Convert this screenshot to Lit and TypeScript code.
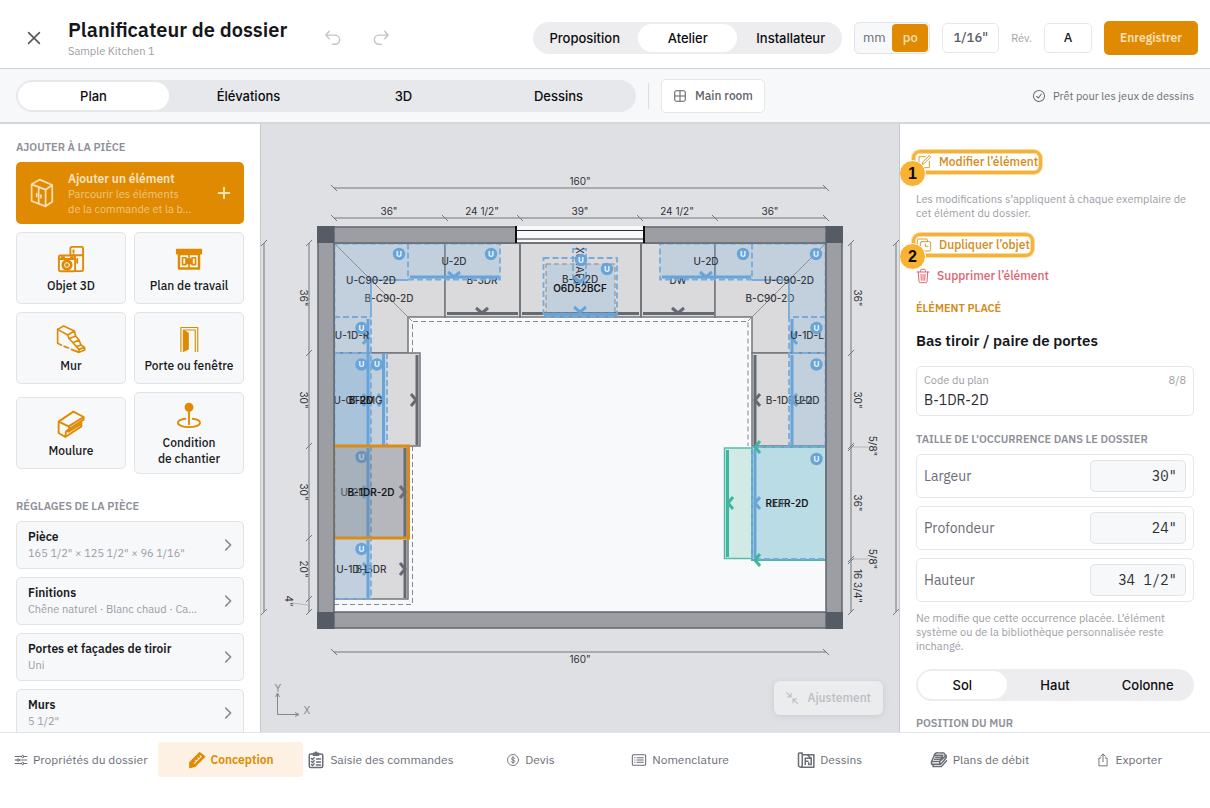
import { LitElement, html, css, svg, nothing } from "lit";
import { customElement, state } from "lit/decorators.js";
import { classMap } from "lit/directives/class-map.js";

/* ---------- icons ---------- */

const line = (size: number, body: unknown, width = 1.5) => html`<svg
  width=${size}
  height=${size}
  viewBox="0 0 24 24"
  fill="none"
  stroke="currentColor"
  stroke-width=${width}
  stroke-linecap="round"
  stroke-linejoin="round"
  aria-hidden="true"
>
  ${body}
</svg>`;

const icons = {
  close: () => line(20, svg`<path d="M5.500 5.500l13 13M18.500 5.500l-13 13" />`, 1.9),
  undo: () => line(20, svg`<path d="M7.500 4L3.500 8.500l4 4.500M4 8.500H14.500a5.500 5.500 0 0 1 0 11h-3" />`, 1.7),
  redo: () => line(20, svg`<path d="M16.500 4l4 4.500-4 4.500M20 8.500H9.500a5.500 5.500 0 0 0 0 11h3" />`, 1.7),
  window: () => line(14, svg`<rect x="3" y="3" width="18" height="18" rx="3" /><path d="M12 3v18M3 12h18" />`, 1.8),
  check: () => line(14, svg`<circle cx="12" cy="12" r="9.500" /><path d="M8 12.500l3 3 5-7" />`, 1.8),
  plus: () => line(16, svg`<path d="M12 4v16M4 12h16" />`, 3),
  chevron: () => line(14, svg`<path d="M8 3.500l8.500 8.500L8 20.500" />`, 2.8),
  fit: () =>
    line(16, svg`<path d="M4 4l6.500 6.500M10.500 5v5.500H5M20 20l-6.500-6.500M13.500 19v-5.500H19" />`, 1.6),
  cabinet: () =>
    line(
      32,
      svg`<path d="M4.200 5.500L10.200 2l9.500 4-5 3.500zM4.200 5.500V18l10.500 4V9.500M14.700 22l5-3.500V6M9.500 7.500V20" />
      <path d="M8 12.500v2M11.200 13.500v2" />`,
      1.3,
    ),
  object3d: () =>
    line(
      30,
      svg`<path d="M11.500 8V3.500a1.200 1.200 0 0 1 1.200-1.200h7.800a1.200 1.200 0 0 1 1.200 1.200v17a1.200 1.200 0 0 1-1.200 1.200H15M12 9h9.500M14 5v2M17 12v3" />
      <rect x="2.300" y="9.200" width="13" height="12.600" rx="1.200" />
      <path d="M2.300 12h13M4.500 10.600h2M12 10.600h1.500" />
      <circle cx="8.800" cy="16.800" r="3.700" fill="currentColor" />
      <circle cx="8.800" cy="16.800" r="1.900" stroke="#f7f8fa" stroke-width=".8" />`,
      1.5,
    ),
  counter: () =>
    line(
      30,
      svg`<path d="M2.200 4.500h19.600v3.300H2.200z" fill="currentColor" />
      <path d="M4 8h16v11.500H4z" stroke-width="2" />
      <path d="M6.800 11h2.800v5.500H6.800zM14.400 11h2.800v5.500h-2.800z" />
      <path d="M12 9v10M10.200 12h3.600v3.500h-3.600z" fill="currentColor" />`,
      1.3,
    ),
  wall: () =>
    line(
      30,
      svg`<path d="M1.300 4.300l4.800-2.700 8.600 4 1 4 2.700 3.200 1.600 4 2.900 1.900v2.100l-4.500 1.900-6-2.400M10 19.200l-3.500-1.300M4.500 17l-3.200-1.600V4.300l8 4.500 1.200 3 3.100 3.200 2.700 3.100 2.100 2.200v2.400M9.300 8.800l5.400-3.200M13.600 15l4.800-2.200M10.500 11.800l5.200-2.200M16.300 18.100l3.700-1.300M18.400 20.300l4.500-1.600" />`,
      1.3,
    ),
  door: () =>
    line(
      30,
      svg`<path d="M5.500 22V2.800h13.500V22M7.500 22V4.800H17V22" stroke-width=".9" />
      <path d="M8.300 5.500l3 2V20l-3 1.500z" fill="currentColor" />`,
      1.1,
    ),
  moulding: () =>
    line(
      30,
      svg`<path d="M2.100 10.100l11.800-8 8.200 4.300-12 7.500zM2.100 10.100v9.100l5.400 3.200 12.800-8.500v-3.200M22.100 6.400v2.100L10.500 16v-2M10.500 16l-2.500 2-.5 4.400M9.800 18.300l10.500-6.600" />`,
      1.5,
    ),
  condition: () =>
    line(
      30,
      svg`<circle cx="12" cy="5" r="2.800" fill="currentColor" />
      <path d="M12 8v10.500" />
      <path d="M9 14.200c-3.400.4-5.800 1.600-5.800 3.200 0 2 3.900 3.500 8.800 3.500s8.800-1.500 8.800-3.500c0-1.600-2.400-2.800-5.800-3.200" />`,
      1.5,
    ),
  edit: () => line(16, svg`<path d="M14 4H4.500v16.500H20V11M9.500 15l.8-3.300L20 2.500l2 2L12.500 14z" />`, 1.3),
  duplicate: () =>
    line(
      16,
      svg`<path d="M6 17H3.500a1.500 1.500 0 0 1-1.500-1.500v-11A1.500 1.500 0 0 1 3.500 3h12A1.500 1.500 0 0 1 17 4.500V7" />
      <rect x="6.500" y="7" width="15.500" height="14" rx="2" /><path d="M14 10.500V14h4" />`,
      1.3,
    ),
  trash: () =>
    line(
      16,
      svg`<path d="M1.500 6h18M7 5.500V3.500A1.500 1.500 0 0 1 8.500 2h4a1.500 1.500 0 0 1 1.500 1.500v2M3.500 6l1 14.500A1.800 1.800 0 0 0 6.300 22h8.400a1.800 1.800 0 0 0 1.800-1.500L17.500 6M7.500 9.500l.4 9M10.500 9.500v9M13.500 9.500l-.4 9" />`,
      1.5,
    ),
  sliders: () =>
    line(
      14,
      svg`<path d="M2 6h11M17 6h5M2 12h3M9 12h13M2 18h11M17 18h5" /><circle cx="15" cy="6" r="2" /><circle cx="7" cy="12" r="2" /><circle cx="15" cy="18" r="2" />`,
      1.7,
    ),
  design: () =>
    line(
      18,
      svg`<path d="M2.500 15.500L15.500 2.500l6.500 5L9 20.500l-6.500 1.500z" fill="currentColor" />
      <path d="M8.500 16.500l8.500-8.500M10 12l1.500 1.500M13 9l1.500 1.500M16 6l1.500 1.500" stroke="#fdf1e3" stroke-width="1.400" />`,
      2,
    ),
  orders: () =>
    line(
      18,
      svg`<rect x="3" y="4" width="18" height="18" rx="2" /><path d="M8.500 5.500V3h2l1.500-1.500L13.500 3h2v2.500z" fill="currentColor" />
      <path d="M6 10l1.300 1.300L9.500 9M6 14l1.300 1.300 2.200-2.300M6 18l1.300 1.300 2.200-2.300M12.500 10.500H18M12.500 14.500H18M12.500 18.500H18" />`,
      2,
    ),
  quote: () =>
    line(
      14,
      svg`<circle cx="12" cy="12" r="9.500" /><path d="M14.800 9.300c-.4-1-1.500-1.500-2.800-1.500-1.600 0-2.800.8-2.800 2.100 0 2.900 5.800 1.300 5.800 4.200 0 1.300-1.300 2.100-3 2.100-1.500 0-2.600-.6-3-1.700M12 6v12" />`,
      1.5,
    ),
  bom: () =>
    line(
      16,
      svg`<rect x="2" y="4" width="20" height="16" rx="1.500" /><path d="M5.500 8.500h.5M5.500 12h.5M5.500 15.500h.5M9 8.500h9.500M9 12h9.500M9 15.500h9.500" />`,
      1.6,
    ),
  drawings: () =>
    line(
      18,
      svg`<path d="M6.500 2.500h-3A1.800 1.800 0 0 0 2 4.500V19a2.500 2.500 0 0 0 5 0V2.500M4.500 21.500H22.500V5H7.500M11 18V9.500h8V18h-3M11 13.500h3.500M19 9.500L14.500 6M15.500 18v-2.500" />`,
      2,
    ),
  cutlist: () =>
    line(
      18,
      svg`<path d="M2 14l3.500-7.500a5 5 0 0 1 5-4h5.500a4 4 0 0 1 4 2.500M2 14h11l4-8.500H6M2 14v3.500h12.500L21.500 9V5.500L13 14v3.500M5 20.500h10.500L22 13M6 11h9M7.500 8.300h9M4 17.500v3" />`,
      2,
    ),
  share: () => line(14, svg`<path d="M8 8.500H5V22h14V8.500h-3M12 15V2M8 5.500L12 2l4 3.500" />`, 1.6),
};

/* ---------- plan drawing ---------- */

type Tone = "ink" | "blue" | "teal";

const rect = (cls: string, x1: number, y1: number, x2: number, y2: number) =>
  svg`<rect class=${cls} x=${x1} y=${y1} width=${x2 - x1} height=${y2 - y1} />`;
const path = (cls: string, d: string) => svg`<path class=${cls} d=${d} />`;
const label = (x: number, y: number, text: string, cls = "label") =>
  svg`<text class=${cls} x=${x} y=${y} dy="0.350em">${text}</text>`;
const turned = (x: number, y: number, text: string, cls = "dim") =>
  svg`<text class=${cls} x="0" y="0" dy="0.350em" transform=${`translate(${x} ${y}) rotate(90)`}>${text}</text>`;
const upper = (x: number, y: number) =>
  svg`<circle class="badge" cx=${x} cy=${y} r="6.200" /><text class="badge-text" x=${x} y=${y} dy="0.360em">U</text>`;

const ARMS = { down: "-6 -6l6 5 6-5", right: "-5 -6l5 6-5 6", left: "5 -6l-5 6 5 6" };
const arrow = (x: number, y: number, way: keyof typeof ARMS, tone: Tone) =>
  path(`bar ${tone}`, `M${x} ${y}m${ARMS[way]}`);

const ticksX = (y: number, xs: number[]) =>
  path("dim-line", `M${xs[0]} ${y}H${xs[xs.length - 1]}` + xs.map((x) => `M${x - 3} ${y - 3}l6 6`).join(""));
const ticksY = (x: number, ys: number[]) =>
  path("dim-line", `M${x} ${ys[0]}V${ys[ys.length - 1]}` + ys.map((y) => `M${x - 3} ${y + 3}l6-6`).join(""));

@customElement("floor-plan")
export class FloorPlan extends LitElement {
  static styles = css`
    :host { display: block; }
    svg { display: block; width: 100%; height: 100%; }
    text { font-family: Inter, "Liberation Sans", sans-serif; text-anchor: middle; }
    .dim { font-size: 10px; fill: #303236; }
    .dim-line { fill: none; stroke: #74777d; stroke-width: 1; }
    .leader { fill: none; stroke: #b3b5ba; stroke-width: 1; }
    .label { font-size: 10px; font-weight: 500; fill: #36393f; }
    .strong { font-size: 10px; font-weight: 600; fill: #17181b; }
    .faint { font-size: 10px; font-weight: 500; fill: #4d545e; }
    .floor { fill: #f8f9fb; }
    .wall { fill: #9c9ea3; stroke: #62666e; stroke-width: 1.5; }
    .corner { fill: #555c65; }
    .base { fill: #dadadd; stroke: #73767c; stroke-width: 1.5; }
    .seam { fill: none; stroke: #73767c; stroke-width: 2; }
    .mitre { fill: none; stroke: #8b8d92; stroke-width: 1; }
    .counter { fill: none; stroke: #85888f; stroke-width: 1; stroke-dasharray: 5 3; }
    .wash { fill: #7cb2de; fill-opacity: 0.25; }
    .wash-deep { fill: #5fa0d2; fill-opacity: 0.26; }
    .edge { fill: none; stroke: #76abdb; stroke-width: 1.8; stroke-dasharray: 6 3; }
    .solid { fill: none; stroke: #76abdb; stroke-width: 1.8; }
    .bar { fill: none; stroke-width: 3; }
    .ink { stroke: #656971; }
    .blue { stroke: #68a4d9; }
    .teal { stroke: #3fb59f; }
    .badge { fill: #68a4d8; }
    .badge-text { font-size: 8px; font-weight: 700; fill: #f0f6fc; }
    .pane { fill: #f8f9fb; stroke: #2c2d31; stroke-width: 1; }
    .jamb { stroke: #0c0c0e; stroke-width: 2; }
    .chosen { fill: #6f747f; fill-opacity: 0.34; stroke: #d98c17; stroke-width: 3; }
    .fridge-door { fill: #d2eae5; stroke: #54bda9; stroke-width: 1.5; }
    .fridge { fill: #b9dce5; stroke: #4fb6a6; stroke-width: 2; }
    .axis { fill: none; stroke: #85888e; stroke-width: 1; }
    .axis-text { font-size: 10px; fill: #85888e; }
  `;

  render() {
    return html`<svg viewBox="261 124 638 608" role="img" aria-label="Plan">
      ${rect("floor", 334, 243, 826, 612)}
      ${path("base", "M334 243H445V317H408V353H334z")}
      ${rect("base", 445, 243, 520, 317)}${rect("base", 520, 243, 641, 317)}
      ${rect("base", 641, 243, 715, 317)}
      ${path("base", "M715 243H826V353H752V317H715z")}
      ${rect("base", 334, 353, 420, 446)}${rect("base", 334, 446, 408, 538)}
      ${rect("base", 334, 538, 408, 599)}${rect("base", 752, 353, 826, 446)}
      ${path("seam", "M520 243V317M641 243V317")}
      ${path("counter", "M334 604.5H412.5V446M412.5 353V321.500H748V446")}
      ${path("mitre", "M334 243L412 321M826 243L748 321")}
      ${path("bar ink", "M447 313.5H518M522 313.5H639M643 313.5H714M417 355V445M405 540V598M755 355V446")}
      ${arrow(482, 314, "down", "ink")}${arrow(678, 314, "down", "ink")}
      ${arrow(416, 400, "right", "ink")}${arrow(405, 569, "right", "ink")}
      ${arrow(755, 400, "left", "ink")}

      ${label(389, 298.5, "B-C90-2D")}${label(770, 298.5, "B-C90-2D")}
      ${label(482, 280, "B-3DR")}${label(678, 280, "DW")}
      ${label(371, 569, "B-3DR")}${label(789, 400, "B-1DR-2D")}

      ${path("wash", "M334 243H408V280H371V317H334z")}
      ${path("wash", "M826 243H752V280H789V317H826z")}
      ${rect("wash", 408, 243, 500, 279)}${rect("wash", 660, 243, 752, 279)}
      ${rect("wash", 334, 317, 371, 353)}${rect("wash", 789, 317, 826, 353)}
      ${rect("wash", 334, 353, 387, 446)}${rect("wash-deep", 334, 353, 371, 446)}
      ${rect("wash", 334, 446, 371, 538)}${rect("wash", 334, 538, 371, 599)}
      ${rect("wash", 789, 353, 826, 446)}
      ${path("mitre", "M334 243L371 280M826 243L789 280")}
      ${path("edge", "M334 243.5H500V279.500H408V243M334 317H371M334.5 243V599H371V317M334 353H371M387 353V446")}
      ${path("edge", "M826 243.5H660V279.500H752V243M826 317H789V446M826 353H789M825.5 243V446")}
      ${path("solid", "M371 317V280H408M789 317V280H752")}
      ${path("bar blue", "M410 277H499M662 277H751M368 319V446M368 540V598M383.5 354V445M792 319V352M792 355V445")}
      ${arrow(454, 278, "down", "blue")}${arrow(706, 278, "down", "blue")}
      ${arrow(368, 338, "right", "blue")}${arrow(792, 338, "left", "blue")}
      ${arrow(368, 400, "right", "blue")}${arrow(383, 400, "right", "blue")}
      ${arrow(368, 569, "right", "blue")}${arrow(792, 400, "left", "blue")}

      ${rect("wash", 546, 264, 615, 313)}${rect("counter", 546, 264, 615, 313)}
      ${rect("edge", 543.5, 258, 617, 316.5)}${rect("edge", 573, 249, 586, 283)}
      ${path("bar blue", "M544 314.5H617")}${arrow(580, 313, "down", "blue")}
      ${label(580, 279, "B-C-2D")}${turned(579, 266, "X04AFF")}
      ${upper(581, 260)}${upper(607, 269)}
      ${arrow(580, 283, "down", "blue")}
      ${label(580, 288, "O6D52BCF", "strong")}

      ${label(371, 280, "U-C90-2D")}${label(789, 280, "U-C90-2D")}
      ${label(454, 261, "U-2D")}${label(706, 261, "U-2D")}
      ${label(352, 335, "U-1D-R")}${label(807, 335, "U-1D-L")}
      ${label(353, 569, "U-1D-L")}${label(807, 400, "U-2D")}
      ${label(358, 400, "U-OTRMG")}${label(361, 400, "B-2D", "strong")}
      ${upper(399, 254)}${upper(491, 254)}${upper(743, 254)}${upper(816, 254)}
      ${upper(361.5, 328)}${upper(816.5, 328)}${upper(361.5, 364.5)}${upper(377, 364.5)}
      ${upper(361.5, 549)}${upper(816.5, 364.5)}${upper(361.5, 457)}

      ${path("bar blue", "M368 448V537")}${arrow(368, 492, "right", "blue")}
      ${path("bar ink", "M405 448V537")}${arrow(405, 492, "right", "ink")}
      ${label(353, 492, "U-2D", "faint")}
      ${rect("chosen", 333.5, 446, 408.5, 538)}
      ${label(371, 492, "B-1DR-2D", "strong")}

      ${rect("fridge-door", 724.5, 448, 826, 558.5)}${rect("fridge", 752, 447, 826, 560)}
      ${path("edge", "M826 447H752V559H826V447")}
      ${path("bar teal", "M727.5 450V557")}${path("bar blue", "M755 449V558")}
      ${arrow(728, 503, "left", "teal")}${arrow(755, 447, "left", "teal")}${arrow(755, 560, "left", "teal")}
      ${arrow(755, 503, "left", "blue")}
      ${label(787, 503, "REFR-2D", "strong")}${label(780, 503, "UF", "faint")}
      ${upper(816.5, 459)}

      ${rect("wall", 318, 227, 842, 243)}${rect("wall", 318, 612, 842, 628)}
      ${rect("wall", 318, 227, 334, 628)}${rect("wall", 826, 227, 842, 628)}
      ${rect("corner", 317, 226, 334, 243)}${rect("corner", 826, 226, 843, 243)}
      ${rect("corner", 317, 612, 334, 629)}${rect("corner", 826, 612, 843, 629)}
      ${rect("floor", 516, 226, 644, 242)}${rect("pane", 516, 230.5, 644, 239)}
      ${path("jamb", "M516 226V243M644 226V243")}

      ${ticksX(188, [334, 826])}${ticksX(218, [334, 445, 520, 640, 715, 826])}${ticksX(652, [334, 826])}
      ${ticksY(264, [243, 612])}${ticksY(309, [243, 353, 446, 538, 599, 612])}
      ${ticksY(851, [243, 353, 446, 448, 559, 561, 612])}${ticksY(896, [243, 612])}
      ${label(580, 181, '160"', "dim")}${label(580, 659, '160"', "dim")}
      ${label(389, 211.5, '36"', "dim")}${label(482, 211.5, '24 1/2"', "dim")}${label(580, 211.5, '39"', "dim")}
      ${label(677, 211.5, '24 1/2"', "dim")}${label(770, 211.5, '36"', "dim")}
      ${turned(303, 298, '36"')}${turned(303, 400, '30"')}${turned(303, 492, '30"')}${turned(303, 569, '20"')}
      ${turned(288, 601, '4"')}${path("leader", "M292 603L308 605M853 447H868M853 559H868")}
      ${turned(857, 298, '36"')}${turned(857, 400, '30"')}${turned(857, 503, '36"')}
      ${turned(857, 586, '16 3/4"')}${turned(872, 446, '5/8"')}${turned(872, 559, '5/8"')}

      ${path("axis", "M277.500 694V714.500H298M275.500 697l2-4 2 4M295 712.500l4 2-4 2")}
      ${label(278, 688, "Y", "axis-text")}${label(307, 710, "X", "axis-text")}
    </svg>`;
  }
}

/* ---------- segmented control ---------- */

@customElement("segmented-control")
export class SegmentedControl extends LitElement {
  static properties = { items: { attribute: false }, selected: { type: Number } };
  declare items: string[];
  declare selected: number;

  constructor() {
    super();
    this.items = [];
    this.selected = 0;
  }

  static styles = css`
    :host {
      display: grid;
      grid-auto-flow: column;
      grid-auto-columns: 1fr;
      gap: 4px;
      padding: 2px;
      height: 32px;
      box-sizing: border-box;
      border-radius: 16px;
      background: var(--track, #ededf0);
    }
    .segment {
      border: 0;
      padding: 0;
      border-radius: 14px;
      background: none;
      color: #0c0c0e;
      font: 500 13px/16px Inter, "Liberation Sans", sans-serif;
    }
    .selected { background: #fff; }
  `;

  render() {
    return this.items.map(
      (name, i) => html`<button
        class=${classMap({ segment: true, selected: i === this.selected })}
        aria-pressed=${i === this.selected ? "true" : "false"}
        @click=${() => (this.selected = i)}
      >${name}</button>`,
    );
  }
}

/* ---------- page ---------- */

@customElement("app-root")
export class AppRoot extends LitElement {
  @state() private tab = 1;

  private tools = [
    { name: html`Objet 3D`, icon: icons.object3d },
    { name: html`Plan de travail`, icon: icons.counter },
    { name: html`Mur`, icon: icons.wall },
    { name: html`Porte ou fenêtre`, icon: icons.door },
    { name: html`Moulure`, icon: icons.moulding },
    { name: html`Condition<br />de chantier`, icon: icons.condition },
  ];

  private settings = [
    ["Pièce", '165 1/2" × 125 1/2" × 96 1/16"'],
    ["Finitions", "Chêne naturel · Blanc chaud · Ca…"],
    ["Portes et façades de tiroir", "Uni"],
    ["Murs", '5 1/2"'],
  ];

  private sizes = [
    ["largeur", "Largeur", '30"'],
    ["profondeur", "Profondeur", '24"'],
    ["hauteur", "Hauteur", '34 1/2"'],
  ];

  private tabs = [
    { name: "Propriétés du dossier", icon: icons.sliders },
    { name: "Conception", icon: icons.design },
    { name: "Saisie des commandes", icon: icons.orders },
    { name: "Devis", icon: icons.quote },
    { name: "Nomenclature", icon: icons.bom },
    { name: "Dessins", icon: icons.drawings },
    { name: "Plans de débit", icon: icons.cutlist },
    { name: "Exporter", icon: icons.share },
  ];

  static styles = css`
    :host {
      display: flex;
      flex-direction: column;
      height: 100vh;
      overflow: hidden;
      background: #fff;
      color: #1a1b1e;
      font: 400 12px/16px "IBM Plex Sans", Roboto, "Liberation Sans", sans-serif;
    }
    * { box-sizing: border-box; }
    button, input { font: inherit; color: inherit; margin: 0; }
    button { border: 0; padding: 0; background: none; }
    h1, h2, h3, p { margin: 0; }
    svg { flex: none; display: block; }

    .header {
      display: flex;
      align-items: center;
      gap: 12px;
      padding: 7px 12px 0 24px;
      height: 69px;
      border-bottom: 1px solid #cfcfd5;
    }
    .close { color: #53565d; }
    .titles { margin-left: 12px; }
    .title { font-size: 20px; line-height: 27px; font-weight: 600; color: #151619; white-space: nowrap; }
    .subtitle { font-size: 11px; line-height: 16px; color: #9b9da4; }
    .history { display: flex; gap: 28px; margin-left: 24px; color: #c3c5c9; }
    .audience { width: 309px; margin-left: auto; }
    .units {
      display: flex;
      padding: 1px;
      height: 32px;
      border: 1px solid #e2e3e7;
      border-radius: 5px;
      background: #f7f8fa;
      font-size: 13px;
      color: #6a6d75;
    }
    .unit { width: 36px; border-radius: 4px; }
    .unit.on { background: #df8a00; color: #f7dfb8; font-weight: 500; }
    .field {
      height: 30px;
      border: 1px solid #e6e7ea;
      border-radius: 5px;
      background: #fff;
      text-align: center;
      font-size: 13px;
      font-weight: 500;
      color: #5a5d65;
    }
    .precision { width: 57px; }
    .revision { display: flex; align-items: center; gap: 12px; font-size: 11px; color: #a0a2a8; }
    .revision .field { width: 48px; padding: 0; color: #1a1b1e; }
    .save {
      width: 94px;
      height: 34px;
      border-radius: 5px;
      background: #df8a00;
      color: #f8e0ba;
      font-weight: 600;
    }

    .subbar {
      display: flex;
      align-items: center;
      gap: 12px;
      height: 55px;
      padding: 0 16px;
      background: #f7f8fa;
      border-bottom: 2px solid #d6d7db;
    }
    .views { width: 620px; --track: #e7e8eb; }
    .rule { width: 1px; height: 26px; background: #dcdde1; }
    .room {
      display: flex;
      align-items: center;
      gap: 8px;
      height: 34px;
      padding: 0 11px;
      border: 1px solid #e6e7ea;
      border-radius: 5px;
      background: #fff;
      color: #5f626a;
      font-weight: 500;
    }
    .ready { display: flex; align-items: center; gap: 7px; margin-left: auto; font-size: 11px; color: #6a6d75; }

    .main { display: flex; flex: 1; min-height: 0; }
    .left {
      width: 261px;
      padding: 15px 16px 0;
      border-right: 1px solid #c6c7cc;
      overflow: hidden;
    }
    .caption { font-size: 11px; line-height: 16px; font-weight: 600; color: #8e9098; }
    .add {
      display: flex;
      align-items: center;
      width: 100%;
      height: 62px;
      margin-top: 7px;
      padding: 0 12px 0 10px;
      gap: 10px;
      border-radius: 5px;
      background: #df8a00;
      color: #f8dfb6;
      text-align: left;
    }
    .add-text { flex: 1; font-size: 11px; line-height: 15px; color: #f1c583; white-space: nowrap; }
    .add-title { display: block; font-size: 12px; line-height: 17px; font-weight: 600; color: #f9e4c4; }
    .tools { display: grid; grid-template-columns: 1fr 1fr; align-items: center; gap: 8px; margin-top: 8px; }
    .tool {
      display: flex;
      flex-direction: column;
      align-items: center;
      justify-content: center;
      gap: 4px;
      min-height: 72px;
      padding: 8px 4px 6px;
      border: 1px solid #e2e3e7;
      border-radius: 5px;
      background: #f7f8fa;
      font-weight: 500;
      color: #1a1b1e;
    }
    .tool svg { color: #df8a00; }
    .room-caption { margin-top: 24px; }
    .settings { display: grid; gap: 8px; margin-top: 7px; }
    .setting {
      display: flex;
      align-items: center;
      justify-content: space-between;
      height: 48px;
      padding: 0 8px 0 11px;
      border: 1px solid #e2e3e7;
      border-radius: 5px;
      background: #f7f8fa;
      text-align: left;
      color: #85888f;
    }
    .setting-name { display: block; line-height: 17px; font-weight: 600; color: #1a1b1e; }
    .setting-value { display: block; font-size: 11px; line-height: 17px; color: #9b9da4; }

    .canvas { position: relative; flex: 1; min-width: 0; background: #dfe0e4; }
    .plan { height: 100%; }
    .fit {
      position: absolute;
      right: 16px;
      bottom: 17px;
      display: flex;
      align-items: center;
      gap: 8px;
      height: 34px;
      padding: 0 12px 0 10px;
      border-radius: 6px;
      background: #ebecee;
      box-shadow: 0 1px 6px #c9cad0;
      font-weight: 500;
      color: #bcbec3;
    }

    .right {
      width: 311px;
      padding: 28px 16px 0;
      border-left: 1px solid #c6c7cc;
      overflow: hidden;
    }
    .action { position: relative; display: flex; align-items: center; gap: 7px; height: 20px; color: #d58a14; font-weight: 500; }
    .step::after {
      content: "";
      position: absolute;
      inset: -2px -4px;
      border: 3px solid #f4b23a;
      border-radius: 8px;
      box-shadow: 0 0 0 1px #fbdc9c, inset 0 0 0 1px #fbdc9c;
    }
    .number {
      position: absolute;
      z-index: 1;
      left: -17px;
      top: 8px;
      width: 27px;
      height: 27px;
      border: 1px solid #fff;
      border-radius: 14px;
      background: #f9b233;
      color: #0c0c0e;
      font: 700 16px/25px "Liberation Sans", sans-serif;
      text-align: center;
    }
    .note { font-size: 11px; line-height: 14px; color: #9b9da4; }
    .scope { margin: 20px 0 15px; }
    .remove { gap: 5px; margin-top: 11px; color: #dd6570; }
    .placed { margin-top: 14px; color: #d58a14; }
    .item-name { margin-top: 15px; font-size: 15px; line-height: 20px; font-weight: 600; color: #151619; }
    .code {
      display: grid;
      grid-template-columns: 1fr auto;
      align-content: start;
      margin-top: 15px;
      height: 50px;
      padding: 5px 7px 0;
      border: 1px solid #e6e7ea;
      border-radius: 5px;
      font-size: 11px;
      color: #9b9da4;
    }
    .code-input {
      grid-column: 1 / 3;
      min-width: 0;
      height: 24px;
      padding: 0;
      border: 0;
      background: none;
      font-size: 14px;
      color: #2b2d31;
    }
    .size-caption { margin-top: 15px; }
    .sizes { display: grid; gap: 8px; margin: 7px 0 9px; }
    .size {
      display: flex;
      align-items: center;
      justify-content: space-between;
      height: 44px;
      padding: 0 7px;
      border: 1px solid #e6e7ea;
      border-radius: 5px;
      font-size: 14px;
      color: #6a6d75;
    }
    .size-input {
      width: 96px;
      height: 32px;
      padding: 0 8px;
      border: 1px solid #e2e3e7;
      border-radius: 5px;
      background: #f7f8fa;
      text-align: right;
      font: 400 14px/20px "IBM Plex Mono", "Liberation Mono", monospace;
      color: #2b2d31;
    }
    .level { margin: 16px 0 14px; }

    .footer {
      display: grid;
      grid-template-columns: repeat(8, 1fr);
      align-items: start;
      gap: 4px;
      height: 76px;
      padding: 9px 8px 0;
      border-top: 1px solid #e2e3e7;
    }
    .tab {
      display: flex;
      align-items: center;
      justify-content: center;
      gap: 5px;
      height: 35px;
      border-radius: 4px;
      color: #6a6d75;
      white-space: nowrap;
    }
    .tab.on { background: #fdf1e3; color: #df8a00; font-weight: 600; }
  `;

  render() {
    return html`
      <header class="header">
        <button class="close" aria-label="Fermer">${icons.close()}</button>
        <div class="titles">
          <h1 class="title">Planificateur de dossier</h1>
          <p class="subtitle">Sample Kitchen 1</p>
        </div>
        <div class="history">
          <button aria-label="Annuler">${icons.undo()}</button>
          <button aria-label="Rétablir">${icons.redo()}</button>
        </div>
        <segmented-control class="audience" .items=${["Proposition", "Atelier", "Installateur"]} .selected=${1}></segmented-control>
        <div class="units">
          <button class="unit">mm</button>
          <button class="unit on">po</button>
        </div>
        <button class="field precision">1/16"</button>
        <label class="revision">Rév.<input class="field" value="A" /></label>
        <button class="save">Enregistrer</button>
      </header>

      <nav class="subbar">
        <segmented-control class="views" .items=${["Plan", "Élévations", "3D", "Dessins"]}></segmented-control>
        <span class="rule"></span>
        <button class="room">${icons.window()}Main room</button>
        <span class="ready">${icons.check()}Prêt pour les jeux de dessins</span>
      </nav>

      <main class="main">
        <aside class="left">
          <h2 class="caption">AJOUTER À LA PIÈCE</h2>
          <button class="add">
            ${icons.cabinet()}
            <span class="add-text"><span class="add-title">Ajouter un élément</span>Parcourir les éléments<br />de la commande et la b…</span>
            ${icons.plus()}
          </button>
          <div class="tools">
            ${this.tools.map((t) => html`<button class="tool">${t.icon()}<span>${t.name}</span></button>`)}
          </div>
          <h2 class="caption room-caption">RÉGLAGES DE LA PIÈCE</h2>
          <div class="settings">
            ${this.settings.map(
              ([name, value]) => html`<button class="setting">
                <span><span class="setting-name">${name}</span><span class="setting-value">${value}</span></span>
                ${icons.chevron()}
              </button>`,
            )}
          </div>
        </aside>

        <section class="canvas">
          <floor-plan class="plan"></floor-plan>
          <button class="fit">${icons.fit()}Ajustement</button>
        </section>

        <aside class="right">
          <button class="action step"><span class="number">1</span>${icons.edit()}Modifier l’élément</button>
          <p class="note scope">Les modifications s’appliquent à chaque exemplaire de cet élément du dossier.</p>
          <button class="action step"><span class="number">2</span>${icons.duplicate()}Dupliquer l’objet</button>
          <button class="action remove">${icons.trash()}Supprimer l’élément</button>
          <h3 class="caption placed">ÉLÉMENT PLACÉ</h3>
          <h2 class="item-name">Bas tiroir / paire de portes</h2>
          <div class="code">
            <label for="code">Code du plan</label><span>8/8</span>
            <input id="code" class="code-input" value="B-1DR-2D" maxlength="8" />
          </div>
          <h3 class="caption size-caption">TAILLE DE L’OCCURRENCE DANS LE DOSSIER</h3>
          <div class="sizes">
            ${this.sizes.map(
              ([id, name, value]) => html`<div class="size">
                <label for=${id}>${name}</label><input id=${id} class="size-input" .value=${value} />
              </div>`,
            )}
          </div>
          <p class="note">Ne modifie que cette occurrence placée. L’élément système ou de la bibliothèque personnalisée reste inchangé.</p>
          <segmented-control class="level" .items=${["Sol", "Haut", "Colonne"]}></segmented-control>
          <h3 class="caption">POSITION DU MUR</h3>
        </aside>
      </main>

      <nav class="footer">
        ${this.tabs.map(
          (t, i) => html`<button
            class=${classMap({ tab: true, on: i === this.tab })}
            aria-current=${i === this.tab ? "page" : nothing}
            @click=${() => (this.tab = i)}
          >${t.icon()}${t.name}</button>`,
        )}
      </nav>
    `;
  }
}
